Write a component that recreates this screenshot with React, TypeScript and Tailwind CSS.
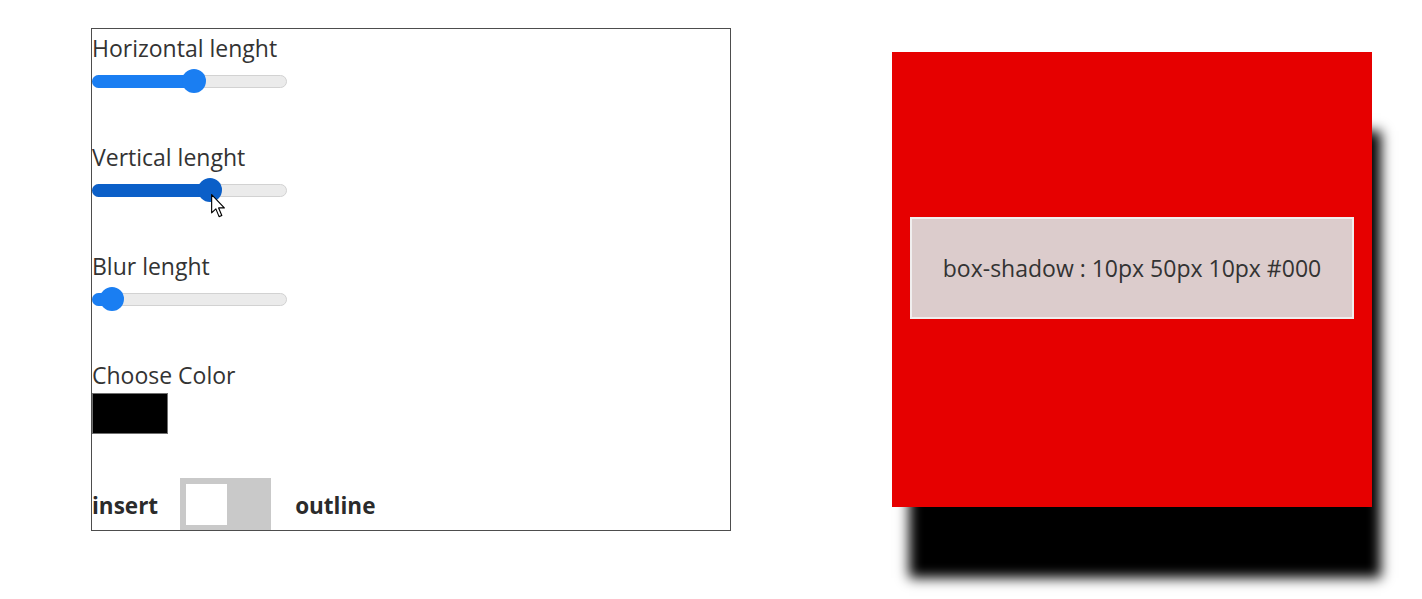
import React from "react";

function Slider({ thumbLeft, color }: { thumbLeft: number; color: string }) {
  return (
    <div className="relative h-[24px] w-[195px]">
      <div className="absolute left-0 right-0 top-[6px] h-[13px] rounded-full border border-[#d2d2d2] bg-[#ebebeb]" />
      <div
        className="absolute left-0 top-[6px] h-[13px] rounded-l-full"
        style={{ width: thumbLeft + 12, background: color }}
      />
      <div
        className="absolute top-0 h-[24px] w-[24px] rounded-full"
        style={{ left: thumbLeft, background: color }}
      />
    </div>
  );
}

export default function App() {
  const font = { fontFamily: '"Open Sans", "Noto Sans", sans-serif' };
  return (
    <div className="flex h-[599px] w-[1422px] overflow-hidden bg-white pl-[91px] pt-[28px]" style={font}>
      <div className="flex h-[503px] w-[640px] shrink-0 flex-col border border-[#4d4d4d] text-[23px] leading-[32px] text-[#333]">
        <div className="mt-[3px] h-[32px]">Horizontal lenght</div>
        <div className="mt-[5px]">
          <Slider thumbLeft={90} color="#1a7ef2" />
        </div>
        <div className="mt-[48px] h-[32px]">Vertical lenght</div>
        <div className="relative mt-[5px]">
          <Slider thumbLeft={106} color="#0b5fc8" />
          <svg
            className="absolute left-[119px] top-[16px]"
            width="15"
            height="24"
            viewBox="0 0 13 21"
          >
            <path
              d="M0.5 0.5 L0.5 16.5 L4.2 13 L7 19.8 L9.4 18.8 L6.6 12.2 L11.6 12.2 Z"
              fill="#fff"
              stroke="#000"
              strokeWidth="1"
              strokeLinejoin="round"
            />
          </svg>
        </div>
        <div className="mt-[48px] h-[32px]">Blur lenght</div>
        <div className="mt-[5px]">
          <Slider thumbLeft={8} color="#1a7ef2" />
        </div>
        <div className="mt-[48px] h-[32px]">Choose Color</div>
        <div className="mt-[2px] h-[41px] w-[76px] border border-[#6f6f6f] bg-black" />
        <div className="mt-[44px] flex h-[52px] items-center font-bold text-[#2b2b2b]">
          <span className="pt-[3px] text-[22.5px]">insert</span>
          <div className="ml-[22px] flex h-[52px] w-[91px] items-start bg-[#c9c9c9] p-[6px]">
            <div className="h-[41px] w-[41px] bg-white" />
          </div>
          <span className="ml-[24px] pt-[3px] text-[22.5px]">outline</span>
        </div>
      </div>
      <div className="ml-[161px] mt-[24px] shrink-0">
        <div className="flex h-[455px] w-[480px] flex-col bg-[#e60000] shadow-[13px_75px_12px_-4px_#000]">
          <div className="mx-[18px] mt-[165px] flex h-[102px] items-center justify-center border-2 border-[#f0eeee] bg-[#dccccc] text-[23px] text-[#333]">
            box-shadow : 10px 50px 10px #000
          </div>
        </div>
      </div>
    </div>
  );
}
